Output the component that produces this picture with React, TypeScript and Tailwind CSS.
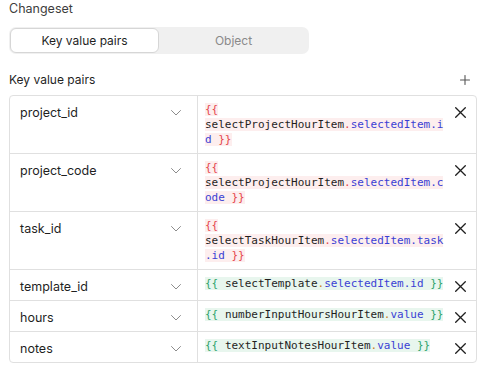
import React from "react";

type Row = {
  key: string;
  kind: "red" | "green";
  ident: string;
  props: string;
};

const rows: Row[] = [
  { key: "project_id", kind: "red", ident: "selectProjectHourItem", props: "selectedItem.id" },
  { key: "project_code", kind: "red", ident: "selectProjectHourItem", props: "selectedItem.code" },
  { key: "task_id", kind: "red", ident: "selectTaskHourItem", props: "selectedItem.task.id" },
  { key: "template_id", kind: "green", ident: "selectTemplate", props: "selectedItem.id" },
  { key: "hours", kind: "green", ident: "numberInputHoursHourItem", props: "value" },
  { key: "notes", kind: "green", ident: "textInputNotesHourItem", props: "value" },
];

function Chevron() {
  return (
    <svg width="10" height="6" viewBox="0 0 10 6" fill="none">
      <polyline points="0.5,0.5 5,5 9.5,0.5" stroke="#8c8c8c" strokeWidth="1" strokeLinecap="round" strokeLinejoin="round" />
    </svg>
  );
}

function XIcon() {
  return (
    <svg width="11" height="11" viewBox="0 0 11 11" fill="none">
      <path d="M0.7 0.7 L10.3 10.3 M10.3 0.7 L0.7 10.3" stroke="#1f1f1f" strokeWidth="1.3" strokeLinecap="round" />
    </svg>
  );
}

function Code({ row }: { row: Row }) {
  const red = row.kind === "red";
  const bg = red ? "bg-[#fdeeee]" : "bg-[#e8f6ee]";
  const brace = red ? "text-[#e5484d]" : "text-[#30a46c]";
  return (
    <span className={`${bg} [box-decoration-break:clone]`}>
      <span className={brace}>{"{{ "}</span>
      <span className="text-[#1f1f1f]">{row.ident}</span>
      <span className={red ? "text-[#e5484d]" : "text-[#c9822a]"}>.</span>
      <span className="text-[#3b3fd4]">{row.props}</span>
      <span className={brace}>{" }}"}</span>
    </span>
  );
}

export default function App() {
  return (
    <div className="w-[486px] h-[375px] bg-white font-['Inter',sans-serif] text-[#1f1f1f]">
      <div className="pl-[9px] pt-0 text-[12.5px] leading-[18px] text-[#3d3d3d]">Changeset</div>
      <div className="ml-[9px] mt-[9px] w-[300px] h-[27px] rounded-[7px] bg-[#f0f0f0] p-[1px] flex">
        <div className="w-[149px] h-full rounded-[6px] bg-white border border-[#d6d6d6] flex items-center justify-center text-[12px] text-[#1f1f1f]">
          Key value pairs
        </div>
        <div className="flex-1 flex items-center justify-center text-[12px] text-[#8a8a8a]">Object</div>
      </div>
      <div className="flex items-center justify-between pl-[9px] pr-[16px] mt-[17px] h-[18px]">
        <span className="text-[12px] text-[#1f1f1f]">Key value pairs</span>
        <svg width="10" height="10" viewBox="0 0 10 10" fill="none">
          <path d="M5 0.5 V9.5 M0.5 5 H9.5" stroke="#555" strokeWidth="1.1" strokeLinecap="round" />
        </svg>
      </div>
      <div className="ml-[9px] mt-[6px] w-[468px] border border-[#e0e0e0] rounded-[4px] overflow-hidden">
        {rows.map((row, i) => (
          <div
            key={row.key}
            className={`grid grid-cols-[188px_1fr_30px] ${i > 0 ? "border-t border-[#e0e0e0]" : ""}`}
          >
            <div className="border-r border-[#e0e0e0] min-h-[30px] flex items-start justify-between pl-[10px] pr-[16px] pt-[7px]">
              <span className="text-[12.5px] leading-[20px]">{row.key}</span>
              <span className="mt-[7px]">
                <Chevron />
              </span>
            </div>
            <div className="pl-[7px] pt-[6px] pb-[6px]">
              <div className="w-[241px] font-['DejaVu_Sans_Mono',monospace] text-[11px] leading-[15px] break-words">
                <Code row={row} />
              </div>
            </div>
            <div className="flex justify-center pt-[11px] pr-[2px]">
              <XIcon />
            </div>
          </div>
        ))}
      </div>
    </div>
  );
}
